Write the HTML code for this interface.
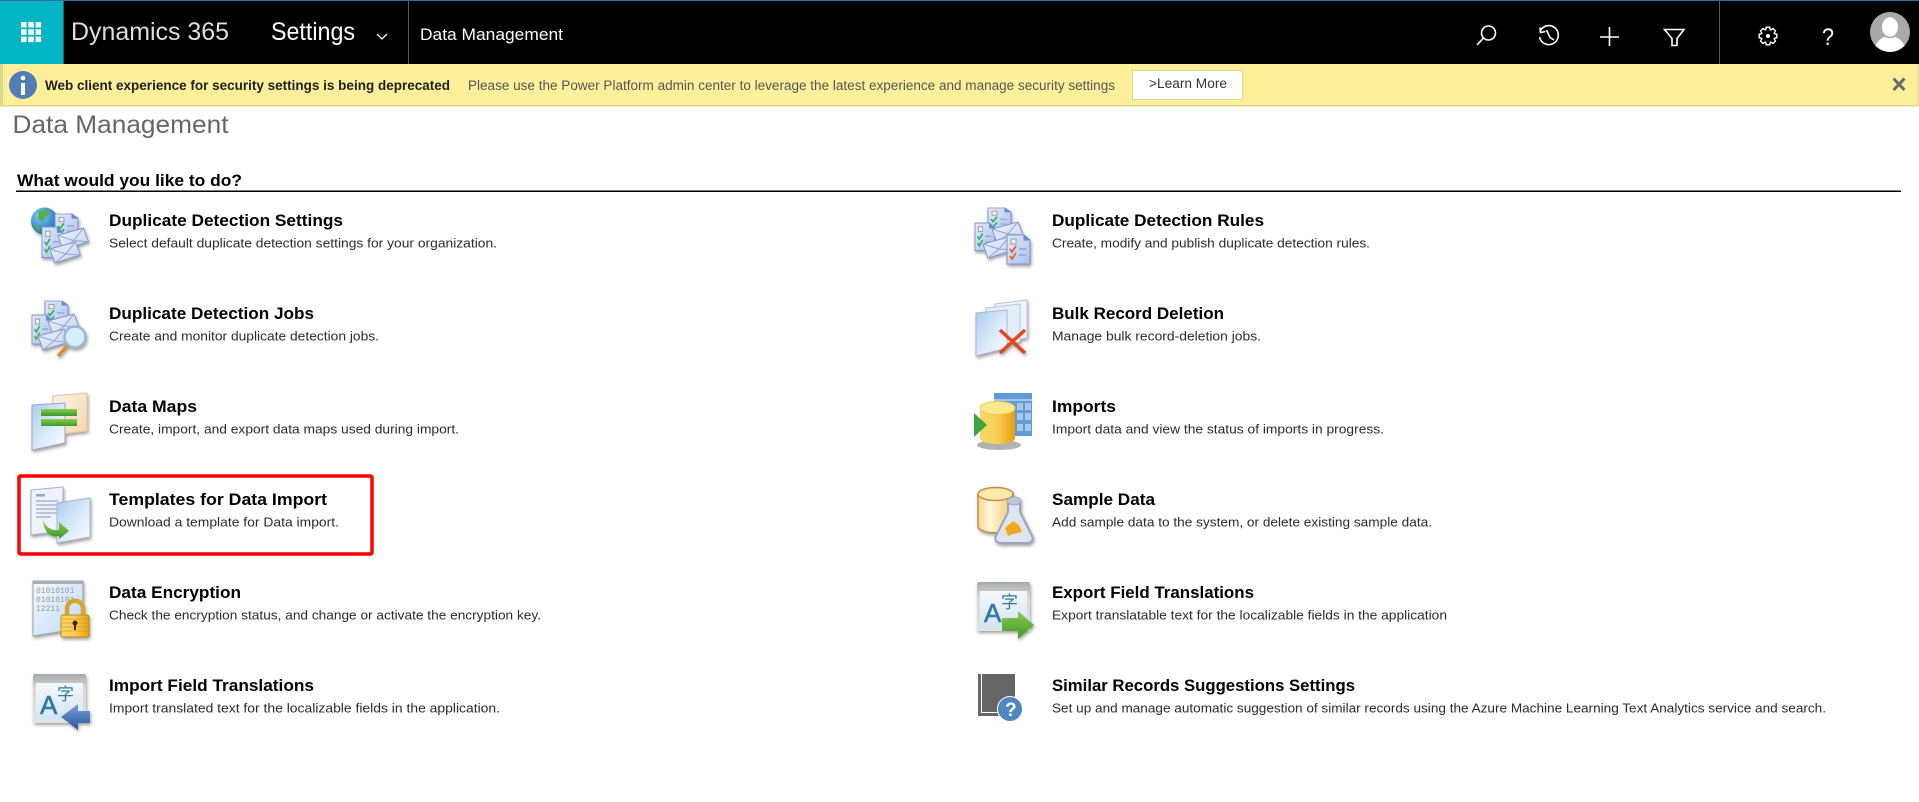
<!DOCTYPE html>
<html lang="en"><head><meta charset="utf-8"><title>Data Management</title>
<style>
html,body{margin:0;padding:0;background:#fff;width:1919px;height:802px;overflow:hidden}
svg{display:block}
text{font-family:"Liberation Sans","Noto Sans CJK SC",sans-serif;white-space:pre}
.t{font-weight:700;font-size:16.5px;fill:#000}
.d{font-size:13px;fill:#2b2b2b}
.ic{filter:drop-shadow(1px 2px 1.5px rgba(0,0,0,.38))}
</style></head><body>
<svg xmlns="http://www.w3.org/2000/svg" width="1919" height="802" viewBox="0 0 1919 802">
<defs>
<linearGradient id="gp" x1="0" y1="0" x2="1" y2="1"><stop offset="0" stop-color="#e3ebfa"/><stop offset="1" stop-color="#a9bfea"/></linearGradient>
<linearGradient id="ge" x1="0" y1="0" x2="1" y2="1"><stop offset="0" stop-color="#eef3fd"/><stop offset="1" stop-color="#c3d3f2"/></linearGradient>
<linearGradient id="gf" x1="0" y1="0" x2="1" y2="1"><stop offset="0" stop-color="#a9ccf2"/><stop offset=".6" stop-color="#e0edfb"/><stop offset="1" stop-color="#f7fbff"/></linearGradient>
<linearGradient id="gf2" x1="0" y1="0" x2="1" y2="1"><stop offset="0" stop-color="#f5f9ff"/><stop offset="1" stop-color="#bcd8f5"/></linearGradient>
<linearGradient id="gpe" x1="0" y1="0" x2="1" y2="1"><stop offset="0" stop-color="#fff3e2"/><stop offset="1" stop-color="#f5d5ac"/></linearGradient>
<linearGradient id="ggr" x1="0" y1="0" x2="0" y2="1"><stop offset="0" stop-color="#8ccb4e"/><stop offset="1" stop-color="#3c9a2b"/></linearGradient>
<linearGradient id="ggo" x1="0" y1="0" x2="1" y2="0"><stop offset="0" stop-color="#f9d867"/><stop offset=".5" stop-color="#f8cf55"/><stop offset="1" stop-color="#eb9d0a"/></linearGradient>
<linearGradient id="gcy" x1="0" y1="0" x2="1" y2="0"><stop offset="0" stop-color="#f8d98a"/><stop offset=".35" stop-color="#fff6dd"/><stop offset="1" stop-color="#f6c765"/></linearGradient>
<linearGradient id="gwin" x1="0" y1="0" x2="0" y2="1"><stop offset="0" stop-color="#a6a9ab"/><stop offset=".3" stop-color="#d8d8d8"/><stop offset="1" stop-color="#e2e2e2"/></linearGradient>
<linearGradient id="gwi" x1="0" y1="0" x2="0" y2="1"><stop offset="0" stop-color="#f4f8fb"/><stop offset="1" stop-color="#d3e4f2"/></linearGradient>
<linearGradient id="gbl" x1="0" y1="0" x2="0" y2="1"><stop offset="0" stop-color="#7aa0dc"/><stop offset="1" stop-color="#2a569f"/></linearGradient>
<radialGradient id="gglobe" cx=".35" cy=".3" r=".8"><stop offset="0" stop-color="#7fd0f5"/><stop offset="1" stop-color="#0b5fb0"/></radialGradient>
<g id="pg"><path d="M0 0H17L23 5V29H0Z" fill="url(#gp)" stroke="#7f93cc"/><path d="M17 0V5H23" fill="#6a8ad0" stroke="#6a8ad0"/><rect x="4" y="4" width="5" height="5" fill="#eef2fa" stroke="#9a9a9a"/><path d="M12 14H19M12 20H19" stroke="#8ea4d8" stroke-width="1.400"/><path d="M3 14l2 3 4-6M3 21l2 3 4-6" fill="none" stroke="#2eb45a" stroke-width="1.800"/></g>
<g id="pgr"><path d="M0 0H17L23 5V29H0Z" fill="url(#gp)" stroke="#7f93cc"/><path d="M17 0V5H23" fill="#6a8ad0" stroke="#6a8ad0"/><rect x="4" y="4" width="5" height="5" fill="#eef2fa" stroke="#9a9a9a"/><path d="M12 14H19M12 20H19" stroke="#8ea4d8" stroke-width="1.400"/><path d="M3 14l2 3 4-6M3 21l2 3 4-6" fill="none" stroke="#e8622c" stroke-width="1.800"/></g>
<g id="env"><path d="M0 7L26 0L31 13L5 21Z" fill="url(#ge)" stroke="#8798c8"/><path d="M0 7L16 12L26 0M5 21L16 12L31 13" fill="none" stroke="#93a6d4"/></g>
<g id="win"><rect x="2" y="1" width="53" height="49" rx="2" fill="url(#gwin)"/><rect x="5" y="10" width="47" height="37" fill="url(#gwi)"/><text x="9" y="41" font-size="26" font-weight="400" style="fill:#2f7ba8;stroke:#2f7ba8;stroke-width:.6">A</text><text x="26" y="27" font-size="17" style="fill:#2f7ba8;font-family:'Noto Sans CJK SC',sans-serif">字</text></g>
</defs>
<rect width="1919" height="802" fill="#fff"/>

<!-- header -->
<rect width="1919" height="64" fill="#000"/>
<rect width="1919" height="1" fill="#3b6aa8"/>
<rect y="1" width="63" height="63" fill="#02b5c4"/>
<rect x="63" y="1" width="1" height="63" fill="#2f5a72"/>
<g fill="#fff"><rect x="21" y="22" width="5.500" height="5.500"/><rect x="28.300" y="22" width="5.500" height="5.500"/><rect x="35.600" y="22" width="5.500" height="5.500"/><rect x="21" y="29.300" width="5.500" height="5.500"/><rect x="28.300" y="29.300" width="5.500" height="5.500"/><rect x="35.600" y="29.300" width="5.500" height="5.500"/><rect x="21" y="36.600" width="5.500" height="5.500"/><rect x="28.300" y="36.600" width="5.500" height="5.500"/><rect x="35.600" y="36.600" width="5.500" height="5.500"/></g>
<text x="71" y="40" font-size="25" fill="#dedede" textLength="158" lengthAdjust="spacingAndGlyphs">Dynamics 365</text>
<text x="271" y="40" font-size="25" fill="#fff" textLength="84" lengthAdjust="spacingAndGlyphs">Settings</text>
<path d="M377 34l5 5 5-5" fill="none" stroke="#fff" stroke-width="1.300"/>
<rect x="408" y="1" width="1" height="63" fill="#5a5a5a"/>
<text x="420" y="40" font-size="17" fill="#fff" textLength="143" lengthAdjust="spacingAndGlyphs">Data Management</text>
<g fill="none" stroke="#fff" stroke-width="1.600">
<circle cx="1488.500" cy="33" r="7"/><path d="M1483.500 38L1477 45"/>
<path d="M1540 31.500A9.500 9.500 0 1 1 1539.500 37"/><path d="M1540 27.500L1540.500 32.500L1545.500 31.500"/><path d="M1546.500 30L1550 37.500L1554 40"/>
<path d="M1609.500 27V46M1600 37H1619"/>
<path d="M1664.500 29.500H1684L1677 38.500V45.500H1672V38.500Z"/>
<polygon transform="translate(1768,36)" stroke-width="1.400" points="6.39,-2.33 8.83,-1.72 8.83,1.72 6.39,2.33 6.17,2.87 7.46,5.03 5.03,7.46 2.87,6.17 2.33,6.39 1.72,8.83 -1.72,8.83 -2.33,6.39 -2.87,6.17 -5.03,7.46 -7.46,5.03 -6.17,2.87 -6.39,2.33 -8.83,1.72 -8.83,-1.72 -6.39,-2.33 -6.17,-2.87 -7.46,-5.03 -5.03,-7.46 -2.87,-6.17 -2.33,-6.39 -1.72,-8.83 1.72,-8.83 2.33,-6.39 2.87,-6.17 5.03,-7.46 7.46,-5.03 6.17,-2.87"/>
</g>
<circle cx="1768" cy="36" r="2" fill="#fff"/>
<rect x="1719" y="1" width="1" height="63" fill="#5a5a5a"/>
<text x="1822" y="45" font-size="24" fill="#fff" textLength="12" lengthAdjust="spacingAndGlyphs">?</text>
<clipPath id="av"><circle cx="1890" cy="32" r="20"/></clipPath>
<circle cx="1890" cy="32" r="20" fill="#a9a9a9"/>
<g clip-path="url(#av)" fill="#fff"><ellipse cx="1890" cy="51" rx="15.500" ry="15"/><ellipse cx="1890" cy="27" rx="8.800" ry="10.500" stroke="#a9a9a9" stroke-width="1.600"/></g>

<!-- notification -->
<rect y="64" width="1919" height="42" fill="#fef09b"/>
<rect y="64" width="3" height="42" fill="#dcd98c"/>
<rect y="105" width="1919" height="1.500" fill="#dcd98c"/>
<rect x="1917" y="64" width="2" height="42" fill="#e6e19a"/>
<circle cx="23" cy="85" r="14" fill="#4f7db4"/>
<rect x="21" y="83" width="4" height="12" fill="#fff"/><circle cx="23" cy="78" r="2.300" fill="#fff"/>
<text x="45" y="90" font-size="13.500" font-weight="700" fill="#1f1f1f" textLength="405" lengthAdjust="spacingAndGlyphs">Web client experience for security settings is being deprecated</text>
<text x="468" y="90" font-size="13.500" fill="#555" textLength="647" lengthAdjust="spacingAndGlyphs">Please use the Power Platform admin center to leverage the latest experience and manage security settings</text>
<rect x="1132.500" y="70.500" width="110" height="29" fill="#fff" stroke="#dcd98c"/>
<text x="1149" y="88" font-size="13.500" fill="#333" textLength="78" lengthAdjust="spacingAndGlyphs">&gt;Learn More</text>
<path d="M1893.500 78.500L1904.500 90M1904.500 78.500L1893.500 90" stroke="#6a6a6a" stroke-width="3"/>

<!-- title -->
<text x="12.500" y="133" font-size="25" fill="#666" textLength="216" lengthAdjust="spacingAndGlyphs">Data Management</text>
<text x="17" y="186" font-size="16.500" font-weight="700" fill="#000" textLength="225" lengthAdjust="spacingAndGlyphs">What would you like to do?</text>
<rect x="16" y="190.500" width="1885" height="1.500" fill="#000"/>

<!-- text col 1 -->
<text class="t" x="109" y="226" textLength="234" lengthAdjust="spacingAndGlyphs">Duplicate Detection Settings</text>
<text class="d" x="109" y="247.500" textLength="388" lengthAdjust="spacingAndGlyphs">Select default duplicate detection settings for your organization.</text>
<text class="t" x="109" y="319" textLength="205" lengthAdjust="spacingAndGlyphs">Duplicate Detection Jobs</text>
<text class="d" x="109" y="340.500" textLength="270" lengthAdjust="spacingAndGlyphs">Create and monitor duplicate detection jobs.</text>
<text class="t" x="109" y="412" textLength="88" lengthAdjust="spacingAndGlyphs">Data Maps</text>
<text class="d" x="109" y="433.500" textLength="350" lengthAdjust="spacingAndGlyphs">Create, import, and export data maps used during import.</text>
<text class="t" x="109" y="505" textLength="218" lengthAdjust="spacingAndGlyphs">Templates for Data Import</text>
<text class="d" x="109" y="526.500" textLength="230" lengthAdjust="spacingAndGlyphs">Download a template for Data import.</text>
<text class="t" x="109" y="598" textLength="132" lengthAdjust="spacingAndGlyphs">Data Encryption</text>
<text class="d" x="109" y="619.500" textLength="432" lengthAdjust="spacingAndGlyphs">Check the encryption status, and change or activate the encryption key.</text>
<text class="t" x="109" y="691" textLength="205" lengthAdjust="spacingAndGlyphs">Import Field Translations</text>
<text class="d" x="109" y="712.500" textLength="391" lengthAdjust="spacingAndGlyphs">Import translated text for the localizable fields in the application.</text>

<!-- text col 2 -->
<text class="t" x="1052" y="226" textLength="212" lengthAdjust="spacingAndGlyphs">Duplicate Detection Rules</text>
<text class="d" x="1052" y="247.500" textLength="318" lengthAdjust="spacingAndGlyphs">Create, modify and publish duplicate detection rules.</text>
<text class="t" x="1052" y="319" textLength="172" lengthAdjust="spacingAndGlyphs">Bulk Record Deletion</text>
<text class="d" x="1052" y="340.500" textLength="209" lengthAdjust="spacingAndGlyphs">Manage bulk record-deletion jobs.</text>
<text class="t" x="1052" y="412" textLength="64" lengthAdjust="spacingAndGlyphs">Imports</text>
<text class="d" x="1052" y="433.500" textLength="332" lengthAdjust="spacingAndGlyphs">Import data and view the status of imports in progress.</text>
<text class="t" x="1052" y="505" textLength="103" lengthAdjust="spacingAndGlyphs">Sample Data</text>
<text class="d" x="1052" y="526.500" textLength="380" lengthAdjust="spacingAndGlyphs">Add sample data to the system, or delete existing sample data.</text>
<text class="t" x="1052" y="598" textLength="202" lengthAdjust="spacingAndGlyphs">Export Field Translations</text>
<text class="d" x="1052" y="619.500" textLength="395" lengthAdjust="spacingAndGlyphs">Export translatable text for the localizable fields in the application</text>
<text class="t" x="1052" y="691" textLength="303" lengthAdjust="spacingAndGlyphs">Similar Records Suggestions Settings</text>
<text class="d" x="1052" y="712.500" textLength="774" lengthAdjust="spacingAndGlyphs">Set up and manage automatic suggestion of similar records using the Azure Machine Learning Text Analytics service and search.</text>

<!-- red box -->
<rect x="19" y="476" width="353" height="78" rx="1.500" fill="none" stroke="#f00" stroke-width="3.500"/>

<!-- icon: dup settings -->
<g class="ic" transform="translate(31,207)">
<circle cx="13.500" cy="14" r="13.500" fill="url(#gglobe)"/><path d="M8 4l8-2 3 5-5 3-2 5-5-3zM3 17l5 2 1 6-4-3z" fill="#55b04a"/>
<use href="#pg" transform="translate(24,7) scale(1,.85)"/>
<use href="#pg" transform="translate(11,20) scale(.9,1.05)"/>
<use href="#env" transform="translate(27,21) scale(.98,1.05)"/>
<use href="#env" transform="translate(19,35) scale(.98,1)"/>
</g>
<!-- icon: jobs -->
<g class="ic" transform="translate(31,300)">
<use href="#pg" transform="translate(14,1) scale(1,.85)"/>
<use href="#pg" transform="translate(1,15) scale(.85,1)"/>
<use href="#env" transform="translate(17,14)"/>
<use href="#env" transform="translate(7,29)"/>
<path d="M37 45L27 56" stroke="#e08a2e" stroke-width="3.500"/>
<circle cx="44" cy="37" r="10.500" fill="#d9eefb" stroke="#9db8d6" stroke-width="2.500"/>
</g>
<!-- icon: data maps -->
<g class="ic" transform="translate(31,393)">
<path d="M22 3L56 0V38L22 42Z" fill="url(#gpe)" stroke="#e4c69e"/>
<path d="M1 12L34 10V50L1 57Z" fill="url(#gf)" stroke="#98a9c0"/>
<rect x="10" y="16" width="36" height="7" fill="url(#ggr)"/><rect x="10" y="26" width="36" height="7" fill="url(#ggr)"/>
</g>
<!-- icon: templates -->
<g class="ic" transform="translate(31,487)">
<path d="M0 3L32 0V44L0 48Z" fill="#eef3fb" stroke="#9fb1cc"/>
<rect x="5" y="7" width="9" height="2.500" fill="#8ea6cc"/>
<path d="M5 14H27M5 18H27M5 22H27M5 26H27M5 30H20" stroke="#a3b6d6" stroke-width="1.500"/>
<path d="M26 16L59 11V50L26 56Z" fill="url(#gf)" stroke="#a5b6cc"/>
<path d="M12 33C15 41 21 44 28 43V35L38 44L28 52V49C19 51 13 45 12 33Z" fill="url(#ggr)"/>
</g>
<!-- icon: encryption -->
<g class="ic" transform="translate(31,581)">
<path d="M2 0H52V47L2 55Z" fill="url(#gf2)" stroke="#9aa3ae"/>
<rect x="2" y="0" width="50" height="3" fill="#a8adb2"/>
<text x="5" y="12" font-size="8" style="font-family:'Liberation Mono',monospace;fill:#9a9a9a">01010101</text>
<text x="5" y="21" font-size="8" style="font-family:'Liberation Mono',monospace;fill:#9a9a9a">01010101</text>
<text x="5" y="30" font-size="8" style="font-family:'Liberation Mono',monospace;fill:#9a9a9a">12211</text>
<path d="M36 34V28C36 17 52 17 52 28V34" fill="none" stroke="#d8a530" stroke-width="4.500"/>
<rect x="30" y="34" width="28" height="22" rx="2" fill="url(#ggo)" stroke="#b98a20"/>
<path d="M31 38H57M31 42H57M31 46H57M31 50H57" stroke="#d59a1c" stroke-width=".8"/>
<circle cx="44" cy="42" r="2.500" fill="#3a2a10"/><rect x="43" y="42" width="2" height="7" fill="#3a2a10"/>
</g>
<!-- icon: import translations -->
<g class="ic" transform="translate(31,673)">
<use href="#win"/>
<path d="M30 44L47 31V38H59V50H47V57Z" fill="url(#gbl)"/>
</g>
<!-- icon: rules -->
<g class="ic" transform="translate(975,207)">
<use href="#pg" transform="translate(13,1) scale(1,.8)"/>
<use href="#pg" transform="translate(0,16) scale(.85,.95)"/>
<use href="#env" transform="translate(17,15)"/>
<use href="#env" transform="translate(8,30)"/>
<use href="#pgr" transform="translate(32,28)"/>
</g>
<!-- icon: bulk delete -->
<g class="ic" transform="translate(975,300)">
<path d="M20 4L52 0V38L20 42Z" fill="#eef4fc" stroke="#b6c4dc"/>
<path d="M11 8L45 4V42L11 46Z" fill="#e4eefb" stroke="#b6c4dc"/>
<path d="M1 13L32 10V48L1 56Z" fill="url(#gf)" stroke="#a5b6cc"/>
<path d="M25 30L50 53M50 30L25 53" stroke="#e6451c" stroke-width="3.500"/>
</g>
<!-- icon: imports -->
<g transform="translate(975,393)">
<ellipse cx="24" cy="52" rx="22" ry="5" fill="#555" opacity=".45"/>
<rect x="19" y="0" width="38" height="43" fill="#5f9bd8"/>
<path d="M19 7H57" stroke="#bcd6ef" stroke-width="1.500"/>
<g fill="#a9c8e8"><rect x="42" y="10" width="6" height="7"/><rect x="50" y="10" width="6" height="7"/><rect x="42" y="20" width="6" height="7"/><rect x="50" y="20" width="6" height="7"/><rect x="42" y="31" width="6" height="7"/><rect x="50" y="31" width="6" height="7"/></g>
<path d="M5 14V45C5 53 40 53 40 45V14Z" fill="url(#ggo)"/>
<ellipse cx="22.500" cy="15" rx="17.500" ry="6.500" fill="#fbe98f" stroke="#efc94a"/>
<path d="M-1 20L12 32L-1 44Z" fill="#3fa348"/>
</g>
<!-- icon: sample data -->
<g class="ic" transform="translate(975,486)">
<path d="M3 8V40C3 49 38 49 38 40V8Z" fill="url(#gcy)" stroke="#c78a4a" stroke-width="1.500"/>
<ellipse cx="20.500" cy="8" rx="17.500" ry="6.500" fill="#fde9a8" stroke="#c78a4a" stroke-width="1.500"/>
<path d="M33 18V26L21 50C19 54 22 57 26 57H52C56 57 59 54 57 50L45 26V18Z" fill="#dfe4ef" stroke="#9aa6c2" stroke-width="2"/>
<ellipse cx="39" cy="15" rx="7" ry="4" fill="#bcc6da" stroke="#9aa6c2"/>
<path d="M30 42L38 35L44 39L47 46L38 48L33 50Z" fill="#f2a91e"/>
</g>
<!-- icon: export translations -->
<g class="ic" transform="translate(975,581)">
<use href="#win"/>
<path d="M59 44L43 30V37H27V50H43V58Z" fill="url(#ggr)"/>
</g>
<!-- icon: similar -->
<g transform="translate(975,674)">
<rect x="3" y="0" width="37" height="42" fill="#666"/>
<path d="M6.500 0V38.500H40" fill="none" stroke="#fff" stroke-width="1"/>
<circle cx="35" cy="35" r="12.500" fill="#4f86c0" stroke="#fff"/>
<text x="30" y="42" font-size="19" font-weight="700" style="fill:#fff">?</text>
</g>
</svg>
</body></html>
